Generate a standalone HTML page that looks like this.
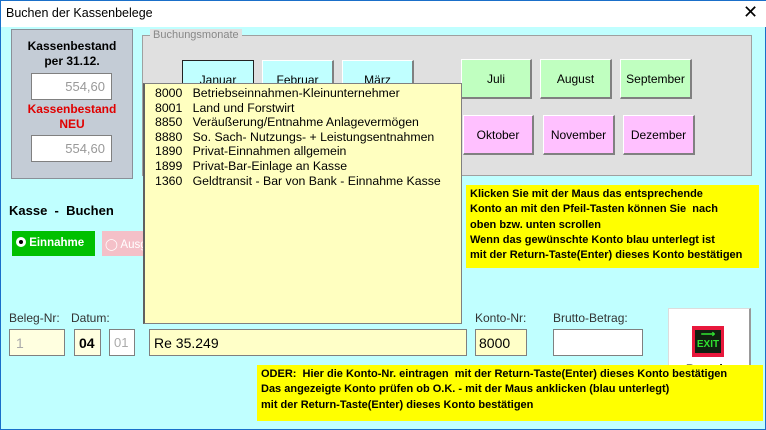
<!DOCTYPE html>
<html><head><meta charset="utf-8"><style>
*{box-sizing:border-box;margin:0;padding:0}
body{width:766px;height:430px;position:relative;background:#c0ffff;font-family:"Liberation Sans",sans-serif;overflow:hidden;border-left:1px solid #1a6fc9;border-right:1px solid #1a6fc9;border-bottom:1px solid #1a6fc9}
.a{position:absolute}
.t{font-size:12px;color:#000}
.btn{position:absolute;font-size:12px;text-align:center;border:1px solid #fff;border-right:2px solid #808080;border-bottom:2px solid #808080}
.in{position:absolute;border:1px solid #808080;font-size:14px;padding:5px 6px 0}
.y{position:absolute;background:#ffff00;font-weight:bold;font-size:11px;line-height:15.3px;padding:2px 4px;white-space:nowrap;font-family:"Liberation Sans",sans-serif}
</style></head><body>
<div class="a" style="left:0;top:0;width:766px;height:27px;background:#fff;border-top:1px solid #1a6fc9"></div>
<div class="a t" style="left:5px;top:6px;font-size:12.5px">Buchen der Kassenbelege</div>
<div class="a" style="left:742px;top:2px;font-size:18px;font-weight:300">✕</div>

<div class="a" style="left:10px;top:29px;width:122px;height:150px;background:#c4ccd6;border:1px solid #8a9098"></div>
<div class="a" style="left:10px;top:39px;width:122px;text-align:center;font-weight:bold;font-size:12px;line-height:15px">Kassenbestand<br>per 31.12.</div>
<div class="in" style="left:30px;top:73px;width:81px;height:27px;background:#fff;text-align:right;color:#999;font-size:13px">554,60</div>
<div class="a" style="left:10px;top:102px;width:122px;text-align:center;font-weight:bold;font-size:12px;line-height:15px;color:#e00000">Kassenbestand<br>NEU</div>
<div class="in" style="left:30px;top:135px;width:81px;height:27px;background:#fff;text-align:right;color:#999;font-size:13px">554,60</div>

<div class="a" style="left:141px;top:35px;width:610px;height:141px;background:#e0e0e0;border:1px solid #a0a0a0"></div>
<div class="a" style="left:149px;top:29px;background:#e0e0e0;color:#888;font-size:11px;padding:0 3px">Buchungsmonate</div>
<div class="btn" style="left:181px;top:60px;width:72px;height:40px;background:#c0ffff;border:1px solid #222;padding-top:12px">Januar</div>
<div class="btn" style="left:261px;top:60px;width:72px;height:40px;background:#c0ffff;padding-top:12px">Februar</div>
<div class="btn" style="left:341px;top:60px;width:72px;height:40px;background:#c0ffff;padding-top:12px">März</div>
<div class="btn" style="left:460px;top:59px;width:71px;height:40px;background:#c0ffc0;padding-top:12px">Juli</div>
<div class="btn" style="left:539px;top:59px;width:72px;height:40px;background:#c0ffc0;padding-top:12px">August</div>
<div class="btn" style="left:619px;top:59px;width:72px;height:40px;background:#c0ffc0;padding-top:12px">September</div>
<div class="btn" style="left:462px;top:115px;width:71px;height:40px;background:#ffc0ff;padding-top:12px">Oktober</div>
<div class="btn" style="left:542px;top:115px;width:72px;height:40px;background:#ffc0ff;padding-top:12px">November</div>
<div class="btn" style="left:622px;top:115px;width:72px;height:40px;background:#ffc0ff;padding-top:12px">Dezember</div>

<div class="a" style="left:142px;top:83px;width:319px;height:241px;background:#ffffc0;border:1px solid #808080;border-left:2px solid #606060;font-size:12.3px;line-height:14.6px;padding:2px 0 0 10px;white-space:pre">8000   Betriebseinnahmen-Kleinunternehmer
8001   Land und Forstwirt
8850   Veräußerung/Entnahme Anlagevermögen
8880   So. Sach- Nutzungs- + Leistungsentnahmen
1890   Privat-Einnahmen allgemein
1899   Privat-Bar-Einlage an Kasse
1360   Geldtransit - Bar von Bank - Einnahme Kasse</div>

<div class="y" style="left:465px;top:185px;width:293px;height:83px">Klicken Sie mit der Maus das entsprechende<br>Konto an mit den Pfeil-Tasten können Sie&nbsp; nach<br>oben bzw. unten scrollen<br>Wenn das gewünschte Konto blau unterlegt ist<br>mit der Return-Taste(Enter) dieses Konto bestätigen</div>

<div class="a" style="left:8px;top:203px;font-weight:bold;font-size:13px">Kasse&nbsp; -&nbsp; Buchen</div>
<div class="a" style="left:11px;top:231px;width:83px;height:25px;background:#00c000;color:#fff;font-size:11.5px;font-weight:bold;padding:6px 0 0 4px"><span style="display:inline-block;width:10px;height:10px;border-radius:50%;border:3px solid #fff;vertical-align:-1px;background:#000"></span> Einnahme</div>
<div class="a" style="left:101px;top:231px;width:41px;height:25px;background:#f4c0c8;color:#fff;font-size:11.5px;padding:6px 0 0 3px;overflow:hidden;white-space:nowrap">◯ Ausg</div>

<div class="a t" style="left:8px;top:311px;color:#333;font-size:12px">Beleg-Nr:</div>
<div class="a t" style="left:70px;top:311px;color:#333;font-size:12px">Datum:</div>
<div class="in" style="left:8px;top:329px;width:56px;height:27px;background:#ffffe0;color:#aaa">1</div>
<div class="in" style="left:73px;top:329px;width:27px;height:27px;background:#ffffe0;font-weight:bold;padding-left:4px">04</div>
<div class="in" style="left:108px;top:329px;width:26px;height:27px;background:#fff;color:#aaa;font-size:13px;padding-left:4px">01</div>
<div class="in" style="left:148px;top:329px;width:318px;height:27px;background:#ffffc8;padding-left:4px">Re 35.249</div>
<div class="a t" style="left:474px;top:311px;color:#333;font-size:12px">Konto-Nr:</div>
<div class="in" style="left:474px;top:329px;width:52px;height:27px;background:#ffffc8;padding-left:3px">8000</div>
<div class="a t" style="left:552px;top:311px;color:#333;font-size:12px">Brutto-Betrag:</div>
<div class="in" style="left:552px;top:329px;width:90px;height:27px;background:#fff"></div>

<div class="a" style="left:667px;top:308px;width:83px;height:60px;background:#fff;border:1px solid #ddd;border-right:2px solid #999"></div>
<div class="a" style="left:691px;top:326px;width:32px;height:31px;background:#e8183c;padding:4px 3px"><div style="background:#102010;width:26px;height:23px;color:#30e030;font-size:10px;font-weight:bold;text-align:center;line-height:10px">⟶<br>EXIT</div></div>
<div class="a" style="left:685px;top:362px;font-weight:bold;font-size:12px">Beenden</div>

<div class="y" style="left:256px;top:365px;width:506px;height:56px;padding-top:2px">ODER:&nbsp; Hier die Konto-Nr. eintragen&nbsp; mit der Return-Taste(Enter) dieses Konto bestätigen<br>Das angezeigte Konto prüfen ob O.K. - mit der Maus anklicken (blau unterlegt)<br>mit der Return-Taste(Enter) dieses Konto bestätigen</div>
</body></html>
